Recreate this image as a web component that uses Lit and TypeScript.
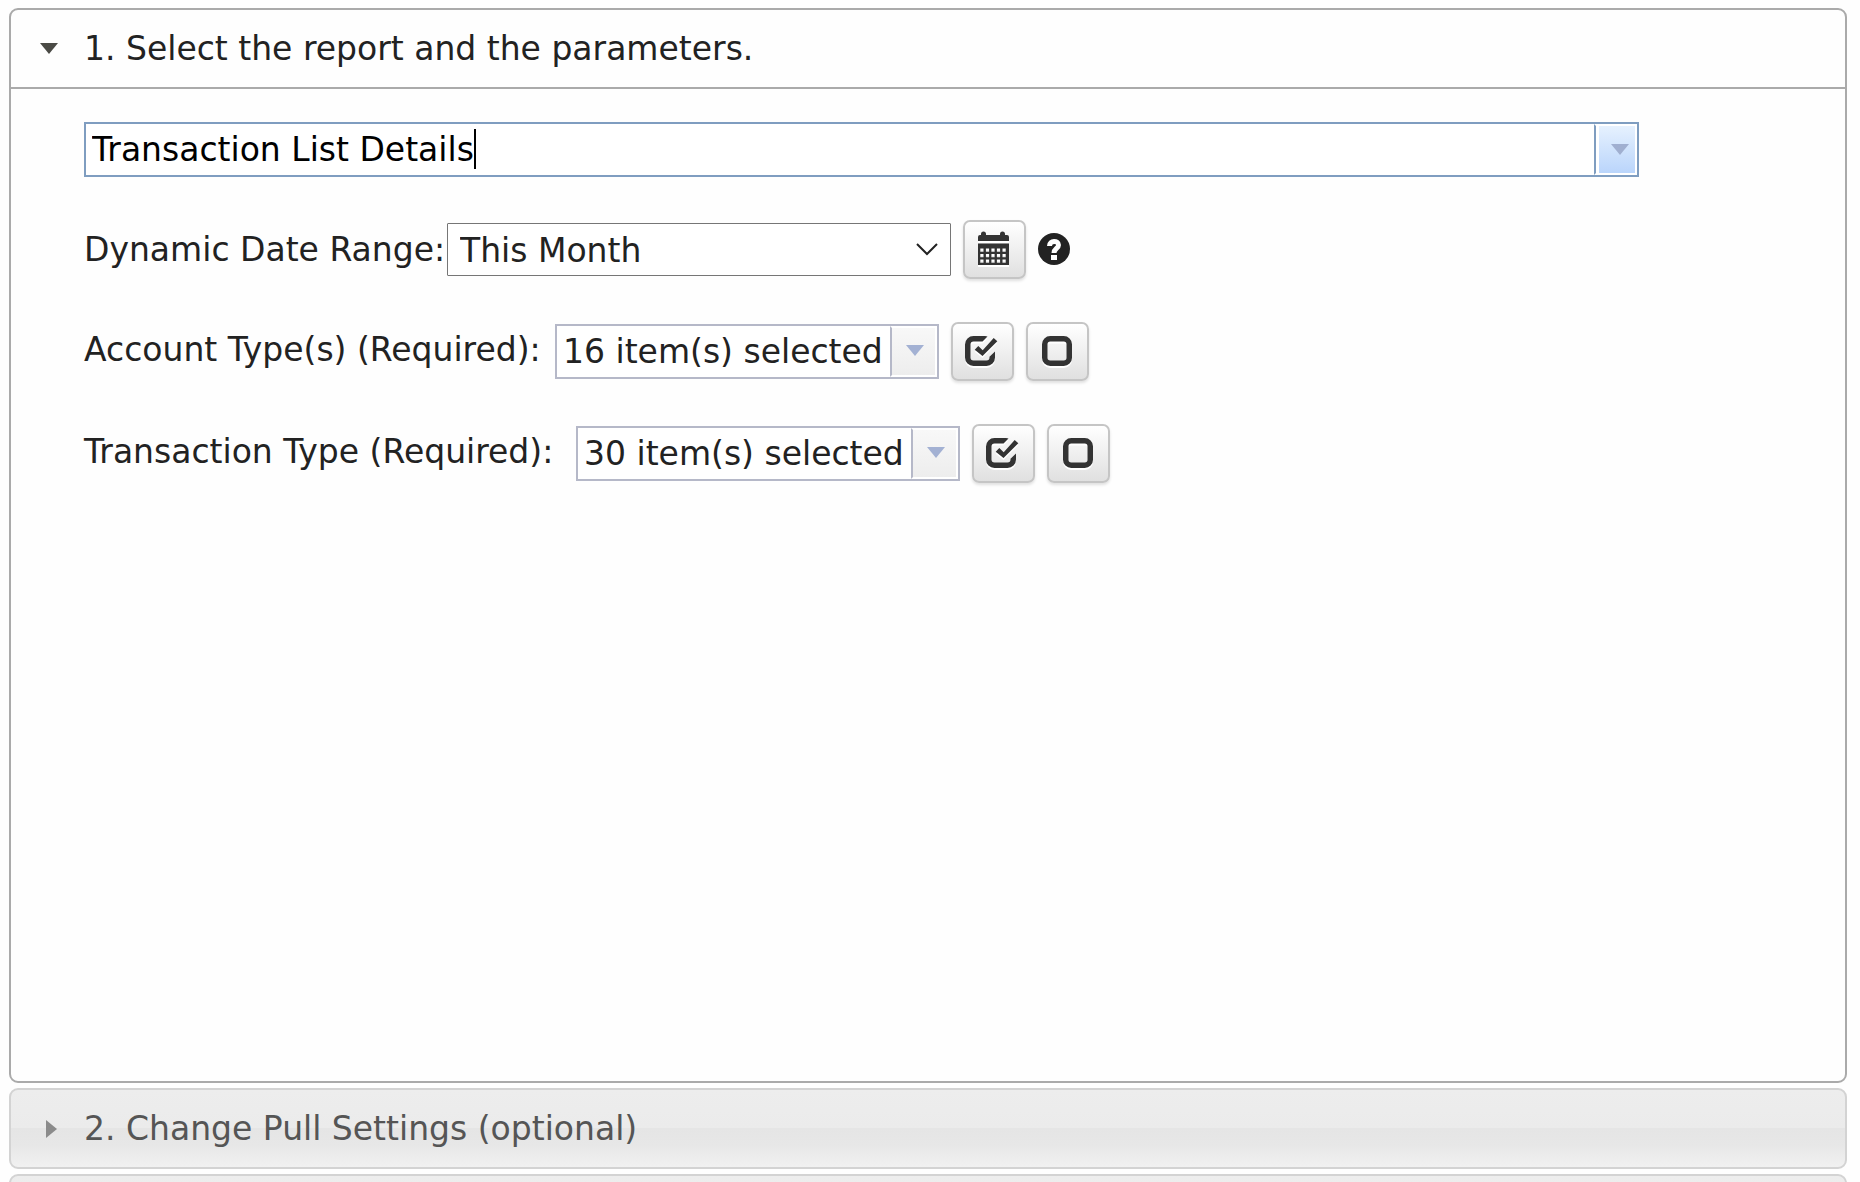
import { LitElement, html, css, svg } from "lit";
import { customElement, property } from "lit/decorators.js";

const textStyles = css`
  * {
    box-sizing: border-box;
  }
  button,
  input,
  select {
    font: inherit;
    color: inherit;
    margin: 0;
  }
  svg {
    display: block;
  }
`;

const icons = {
  calendar: svg`
    <path fill-rule="evenodd" d="M3 3V2a2 2 0 0 1 5 0v1H22V2a2 2 0 0 1 5 0v1h2a2 2 0 0 1 2 2v4H0V5a2 2 0 0 1 2-2z
      M0 11.500H31V33H0z
      M2.300 16.500v3.200h3.200v-3.200z M7.900 16.500v3.200h3.200v-3.200z M13.400 16.500v3.200h3.200v-3.200z M18.900 16.500v3.200h3.200v-3.200z M24.500 16.500v3.200h3.200v-3.200z
      M2.300 22v3.200h3.200v-3.200z M7.900 22v3.200h3.200v-3.200z M13.400 22v3.200h3.200v-3.200z M18.900 22v3.200h3.200v-3.200z M24.500 22v3.200h3.200v-3.200z
      M2.300 27.500v3.200h3.200v-3.200z M7.900 27.500v3.200h3.200v-3.200z M13.400 27.500v3.200h3.200v-3.200z M18.900 27.500v3.200h3.200v-3.200z M24.500 27.500v3.200h3.200v-3.200z"/>`,
  check: svg`
    <path d="M22.500 0.500Q21.500 0 20 0H8.500A8.500 8.500 0 0 0 0 8.500V21.500A8.500 8.500 0 0 0 8.500 30H21.500A8.500 8.500 0 0 0 30 21.500V15.500L24.500 20.800V21.500A3 3 0 0 1 21.500 24.500H8.500A3 3 0 0 1 5.500 21.500V8.500A3 3 0 0 1 8.500 5.500H17.500z"/>
    <path d="M9.700 13.700L13.300 10L17.700 14.300L28.700 2L32.300 5.300L17.500 20z"/>`,
  empty: svg`<rect x="2.750" y="2.750" width="24.500" height="24.500" rx="5.500" fill="none" stroke="currentColor" stroke-width="5.500"/>`,
};

@customElement("icon-button")
class IconButton extends LitElement {
  static styles = [
    textStyles,
    css`
      :host {
        display: block;
      }
      .button {
        display: flex;
        align-items: center;
        justify-content: center;
        width: 63px;
        height: 59px;
        padding: 0 2px 2px 0;
        border: 2px solid #c5c5c5;
        border-radius: 7px;
        color: #333;
        background: linear-gradient(#fff, #e0e0e0);
        box-shadow: 0 2px 3px rgba(0, 0, 0, 0.12);
      }
      .icon {
        fill: currentColor;
        overflow: visible;
        filter: drop-shadow(0 2px 0 #fff);
      }
    `,
  ];
  @property() icon: keyof typeof icons = "empty";
  @property() name = "";

  render() {
    const width = this.icon === "empty" ? 30 : this.icon === "check" ? 33 : 31;
    const height = this.icon === "calendar" ? 33 : 30;
    return html`<button class="button" type="button" aria-label=${this.name}>
      <svg class="icon" width=${width} height=${height} viewBox="0 0 ${width} ${height}" aria-hidden="true">
        ${icons[this.icon]}
      </svg>
    </button>`;
  }
}

@customElement("app-root")
class AppRoot extends LitElement {
  static styles = [
    textStyles,
    css`
      :host {
        display: flex;
        flex-direction: column;
        gap: 5px;
        box-sizing: border-box;
        height: 100vh;
        overflow: hidden;
        padding: 8px 13px 0 9px;
        background: #fefefe;
        color: #222;
        font: 33px/40px Verdana, "DejaVu Sans", sans-serif;
      }
      .section {
        flex: none;
        display: flex;
        flex-direction: column;
        border: 2px solid #aaa;
        border-radius: 9px;
        background: #fefefe;
      }
      .open {
        min-height: calc(100vh - 107px);
      }
      .closed {
        border-color: #d3d3d3;
        color: #555;
        background: linear-gradient(#ededed 0, #ebebeb 50%, #e5e5e5 50%, #e7e7e7 72%, #f1f1f1);
      }
      .header {
        display: flex;
        align-items: center;
        width: 100%;
        height: 77px;
        padding: 0 0 0 29px;
        border: 0;
        background: none;
        text-align: left;
      }
      .open > .header {
        height: 79px;
        border-bottom: 2px solid #aaa;
      }
      .marker {
        width: 20px;
        margin-right: 24px;
      }
      .body {
        display: flex;
        flex-direction: column;
        gap: 43px;
        padding: 33px 206px 33px 73px;
      }
      .row {
        display: flex;
        align-items: center;
        height: 59px;
      }
      .row label {
        white-space: nowrap;
      }
      .date {
        width: 363px;
      }
      .account,
      .transaction {
        padding-bottom: 4px;
      }
      .account {
        width: 471px;
      }
      .transaction {
        width: 492px;
      }
      .combo {
        display: flex;
        position: relative;
        height: 55px;
        border: 2px solid #b5b8c8;
        background: #fff;
      }
      .row .combo {
        width: 384px;
      }
      .field {
        flex: 1;
        min-width: 0;
        padding: 0 0 0 6px;
        border: 0;
        outline: 0;
        background: none;
      }
      .trigger {
        width: 47px;
        padding: 0 0 2px 2px;
        border: 2px solid #fff;
        border-left: 2px solid #b5b8c8;
        background: linear-gradient(#f8f8f8, #ededed);
        display: flex;
        align-items: center;
        justify-content: center;
      }
      .active {
        border-color: #7f9dc0;
      }
      .active .field {
        color: #000;
        caret-color: transparent;
      }
      .active .trigger {
        width: 43px;
        border-left-color: #7f9dc0;
        box-shadow: inset 3px 0 0 #fff;
        padding: 0 0 0 9px;
        background: linear-gradient(#e6f1fe, #bad5fb);
      }
      .caret {
        position: absolute;
        left: 388px;
        top: 5px;
        width: 2px;
        height: 40px;
        background: #000;
      }
      .picker {
        position: relative;
        width: 504px;
      }
      .select {
        display: block;
        appearance: none;
        width: 100%;
        height: 53px;
        padding: 2px 50px 0 12px;
        border: 1px solid #767676;
        border-radius: 1px;
        background: #fff;
      }
      .chevron {
        position: absolute;
        right: 13px;
        top: 20px;
        pointer-events: none;
      }
      .tools {
        display: flex;
        align-items: center;
        gap: 12px;
        margin-left: 12px;
      }
      .help {
        padding: 0 0 2px;
        border: 0;
        background: none;
      }
    `,
  ];

  private arrow(color: string) {
    return html`<svg width="18" height="11" viewBox="0 0 18 11" aria-hidden="true">
      <path d="M0 0H18L9 11z" fill=${color} />
    </svg>`;
  }

  private items(id: string, label: string, count: number) {
    return html`<div class="row">
      <label class=${id} for=${id}>${label}</label>
      <div class="combo">
        <input class="field" id=${id} type="text" readonly .value=${`${count} item(s) selected`} />
        <button class="trigger" type="button" aria-label="Show items">${this.arrow("#a3b1d3")}</button>
      </div>
      <div class="tools">
        <icon-button icon="check" name="Select all"></icon-button>
        <icon-button icon="empty" name="Clear all"></icon-button>
      </div>
    </div>`;
  }

  render() {
    return html`
      <section class="section open">
        <button class="header" type="button" aria-expanded="true">
          <span class="marker">${this.arrow("#4a4a45")}</span>
          <span>1. Select the report and the parameters.</span>
        </button>
        <div class="body">
          <div class="combo active">
            <input class="field" type="text" aria-label="Report" .value=${"Transaction List Details"} />
            <span class="caret"></span>
            <button class="trigger" type="button" aria-label="Show reports">${this.arrow("#a0afd0")}</button>
          </div>
          <div class="row">
            <label class="date" for="range">Dynamic Date Range:</label>
            <div class="picker">
              <select class="select" id="range">
                <option>This Month</option>
              </select>
              <svg class="chevron" width="22" height="13" viewBox="0 0 22 13" aria-hidden="true">
                <path d="M1 1L11 11L21 1" fill="none" stroke="#222" stroke-width="2" />
              </svg>
            </div>
            <div class="tools">
              <icon-button icon="calendar" name="Choose dates"></icon-button>
              <button class="help" type="button" aria-label="Help">
                <svg width="32" height="32" viewBox="0 0 32 32" aria-hidden="true">
                  <circle cx="16" cy="16" r="16" fill="#222" />
                  <path d="M11.500 13C11.500 6.800 20.500 7.300 20.500 12C20.500 15.500 16 15.500 16 20" fill="none" stroke="#fff" stroke-width="5" />
                  <rect x="13" y="22" width="6" height="5" fill="#fff" />
                </svg>
              </button>
            </div>
          </div>
          ${this.items("account", "Account Type(s) (Required):", 16)}
          ${this.items("transaction", "Transaction Type (Required):", 30)}
        </div>
      </section>
      <section class="section closed">
        <button class="header" type="button" aria-expanded="false">
          <span class="marker">
            <svg width="20" height="18" viewBox="0 0 20 18" aria-hidden="true">
              <path d="M6 0L17 9L6 18z" fill="#8b8b8b" />
            </svg>
          </span>
          <span>2. Change Pull Settings (optional)</span>
        </button>
      </section>
      <section class="section closed">
        <div class="header"></div>
      </section>
    `;
  }
}
